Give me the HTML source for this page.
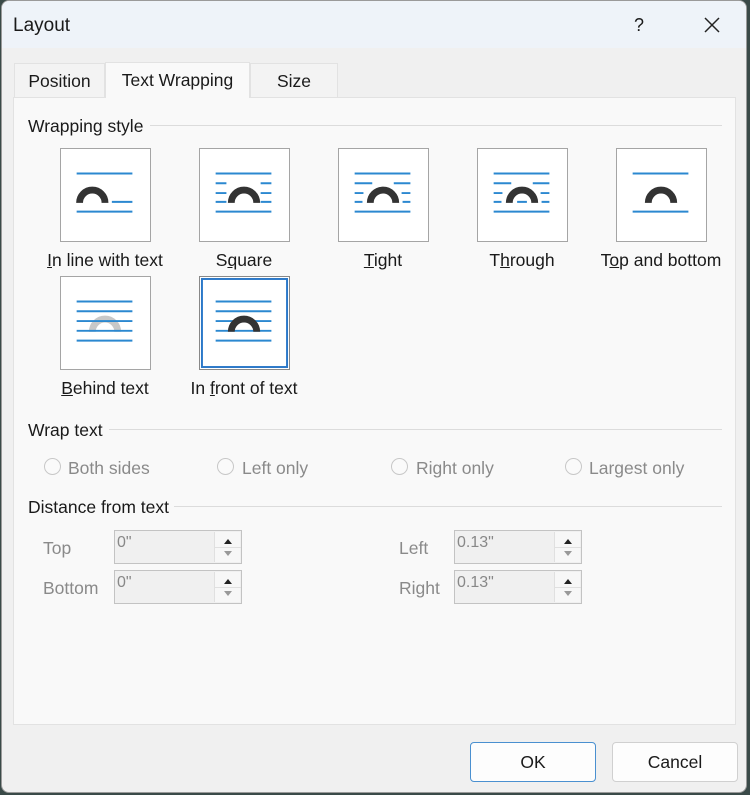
<!DOCTYPE html>
<html><head><meta charset="utf-8"><style>
*{box-sizing:border-box;margin:0;padding:0}
body{width:750px;height:795px;background:#3a4a48;position:relative;overflow:hidden;font-family:"Liberation Sans",sans-serif;color:#1a1a1a}
.abs{position:absolute}
#dlg{left:1px;top:0;width:746px;height:793px;background:#f0f0f0;border:1px solid #9a9a9a;border-radius:8px;overflow:hidden}
#title{left:0;top:0;width:746px;height:47px;background:#eef3f9}
.t{font-size:17.5px;white-space:nowrap}
.tab{top:62px;height:35px;font-size:17.5px;text-align:center;line-height:34px;border:1px solid #e2e2e2;border-bottom:none;background:#f3f3f3}
#panel{left:11px;top:96px;width:723px;height:628px;background:#f9f9f9;border:1px solid #e2e2e2}
.box{width:91px;height:94px;background:#fff;border:1px solid #a5a5a5}
.lbl{font-size:17.5px;text-align:center;width:160px;white-space:nowrap}
.hr{height:1px;background:#dcdcdc}
.gray{color:#8a8a8a}
.rad{width:17px;height:17px;border:1px solid #c8c8c8;border-radius:50%;background:#fafafa}
.inp{width:128px;height:34px;border:1px solid #c3c3c3;background:#f0f0f0;font-size:16px;color:#888;padding:3px 0 0 2px}
.spin{position:absolute;right:1px;top:1px;width:26px;height:30px;background:#f7f7f7;border-left:1px solid #e0e0e0}
.btn{top:741px;width:126px;height:40px;background:#fdfdfd;border:1px solid #d0d0d0;border-radius:4px;font-size:17.5px;text-align:center;line-height:38px}
u{text-decoration:underline}
</style></head><body>
<div id="dlg" class="abs">
<div id="title" class="abs"></div>
<div class="abs t" style="left:11px;top:14px;font-size:19px">Layout</div>
<div class="abs t" style="left:632px;top:14px;font-size:18px">?</div>
<svg class="abs" style="left:701px;top:15px" width="18" height="18"><path d="M2 2L16 16M16 2L2 16" stroke="#222" stroke-width="1.5"/></svg>
<div class="abs tab" style="left:12px;width:91px">Position</div>
<div class="abs tab" style="left:248px;width:88px">Size</div>
<div id="panel" class="abs"></div>
<div class="abs tab" style="left:103px;width:145px;height:36px;background:#f9f9f9;top:61px;border-color:#e2e2e2">Text Wrapping</div>

<div class="abs t" style="left:26px;top:115px">Wrapping style</div>
<div class="abs hr" style="left:148px;top:124px;width:572px"></div>

<svg class="abs box" style="left:58px;top:147px" viewBox="0 0 91 94"><g stroke="#2b88d0" stroke-width="2"><path d="M16 25H73M16 64H73M52 54H73"/></g><path d="M19 55A13 13 0 0 1 45 55" fill="none" stroke="#333" stroke-width="7"/></svg>
<svg class="abs box" style="left:197px;top:147px" viewBox="0 0 91 94"><g stroke="#2b88d0" stroke-width="2"><path d="M16 25H73M16 64H73M16 35H27M62 35H73M16 45H27M62 45H73M16 54H27M62 54H73"/></g><path d="M32 55A13 13 0 0 1 58 55" fill="none" stroke="#333" stroke-width="7"/></svg>
<svg class="abs box" style="left:336px;top:147px" viewBox="0 0 91 94"><g stroke="#2b88d0" stroke-width="2"><path d="M16 25H73M16 64H73M16 35H34M56 35H73M16 45H25M64 45H73M16 54H24M65 54H73"/></g><path d="M32 55A13 13 0 0 1 58 55" fill="none" stroke="#333" stroke-width="7"/></svg>
<svg class="abs box" style="left:475px;top:147px" viewBox="0 0 91 94"><g stroke="#2b88d0" stroke-width="2"><path d="M16 25H73M16 64H73M16 35H34M56 35H73M16 45H25M64 45H73M16 54H24M65 54H73M40 54H50"/></g><path d="M32 55A13 13 0 0 1 58 55" fill="none" stroke="#333" stroke-width="7"/></svg>
<svg class="abs box" style="left:614px;top:147px" viewBox="0 0 91 94"><g stroke="#2b88d0" stroke-width="2"><path d="M16 25H73M16 64H73"/></g><path d="M32 55A13 13 0 0 1 58 55" fill="none" stroke="#333" stroke-width="7"/></svg>
<div class="abs lbl" style="left:23px;top:249px"><u>I</u>n line with text</div>
<div class="abs lbl" style="left:162px;top:249px">S<u>q</u>uare</div>
<div class="abs lbl" style="left:301px;top:249px"><u>T</u>ight</div>
<div class="abs lbl" style="left:440px;top:249px">T<u>h</u>rough</div>
<div class="abs lbl" style="left:579px;top:249px">T<u>o</u>p and bottom</div>

<svg class="abs box" style="left:58px;top:275px" viewBox="0 0 91 94"><path d="M32 56A13 13 0 0 1 58 56" fill="none" stroke="#c8c8c8" stroke-width="7"/><g stroke="#2b88d0" stroke-width="2"><path d="M16 25H73M16 35H73M16 45H73M16 55H73M16 65H73"/></g></svg>
<svg class="abs box" style="left:197px;top:275px;border:1px solid #888" viewBox="0 0 91 94"><rect x="2" y="2" width="87" height="90" fill="none" stroke="#2b78c8" stroke-width="2"/><g stroke="#2b88d0" stroke-width="2"><path d="M16 25H73M16 35H73M16 45H73M16 55H73M16 65H73"/></g><path d="M32 56A13 13 0 0 1 58 56" fill="none" stroke="#333" stroke-width="7"/></svg>
<div class="abs lbl" style="left:23px;top:377px"><u>B</u>ehind text</div>
<div class="abs lbl" style="left:162px;top:377px">In <u>f</u>ront of text</div>

<div class="abs t" style="left:26px;top:419px">Wrap text</div>
<div class="abs hr" style="left:107px;top:428px;width:613px"></div>
<div class="abs rad" style="left:42px;top:457px"></div><div class="abs t gray" style="left:66px;top:457px">Both sides</div>
<div class="abs rad" style="left:215px;top:457px"></div><div class="abs t gray" style="left:240px;top:457px">Left only</div>
<div class="abs rad" style="left:389px;top:457px"></div><div class="abs t gray" style="left:414px;top:457px">Right only</div>
<div class="abs rad" style="left:563px;top:457px"></div><div class="abs t gray" style="left:587px;top:457px">Largest only</div>

<div class="abs t" style="left:26px;top:496px">Distance from text</div>
<div class="abs hr" style="left:172px;top:505px;width:548px"></div>

<div class="abs t gray" style="left:41px;top:537px">Top</div>
<div class="abs t gray" style="left:41px;top:577px">Bottom</div>
<div class="abs t gray" style="left:397px;top:537px">Left</div>
<div class="abs t gray" style="left:397px;top:577px">Right</div>
<div class="abs inp" style="left:112px;top:529px">0"<div class="spin"><svg width="26" height="30"><path d="M9 12L13 7L17 12Z" fill="#222"/><path d="M9 19L13 24L17 19Z" fill="#999"/><path d="M0 15.5H26" stroke="#e0e0e0"/></svg></div></div>
<div class="abs inp" style="left:112px;top:569px">0"<div class="spin"><svg width="26" height="30"><path d="M9 12L13 7L17 12Z" fill="#222"/><path d="M9 19L13 24L17 19Z" fill="#999"/><path d="M0 15.5H26" stroke="#e0e0e0"/></svg></div></div>
<div class="abs inp" style="left:452px;top:529px">0.13"<div class="spin"><svg width="26" height="30"><path d="M9 12L13 7L17 12Z" fill="#222"/><path d="M9 19L13 24L17 19Z" fill="#999"/><path d="M0 15.5H26" stroke="#e0e0e0"/></svg></div></div>
<div class="abs inp" style="left:452px;top:569px">0.13"<div class="spin"><svg width="26" height="30"><path d="M9 12L13 7L17 12Z" fill="#222"/><path d="M9 19L13 24L17 19Z" fill="#999"/><path d="M0 15.5H26" stroke="#e0e0e0"/></svg></div></div>

<div class="abs btn" style="left:468px;border:1px solid #4a90d0">OK</div>
<div class="abs btn" style="left:610px">Cancel</div>
</div>
</body></html>
